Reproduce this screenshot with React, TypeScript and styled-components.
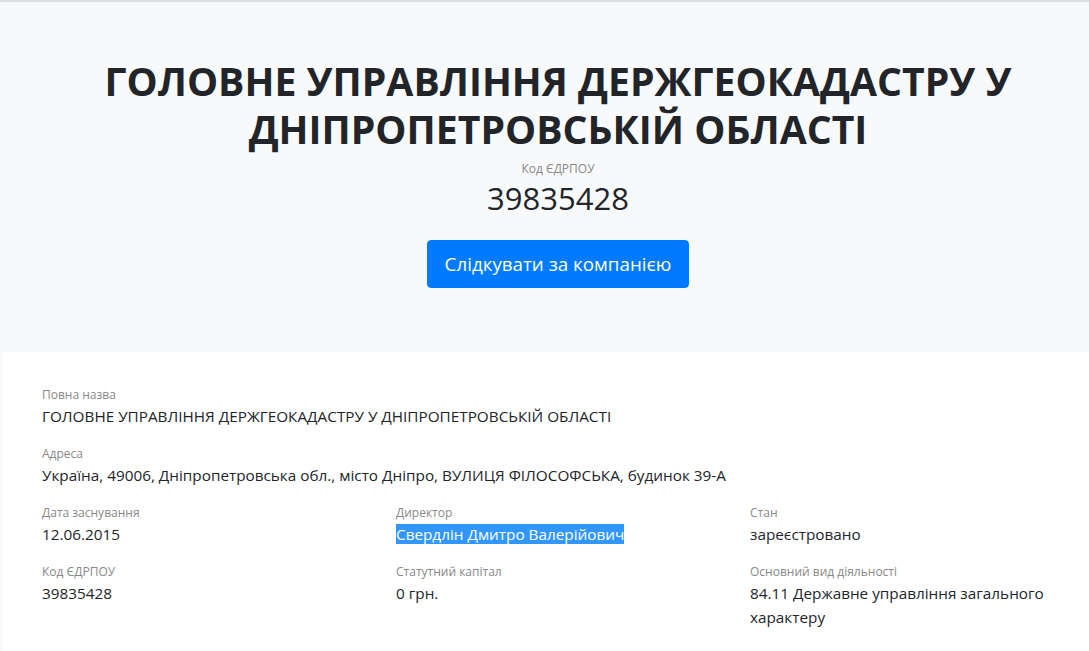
import styled, { createGlobalStyle } from "styled-components";

const GlobalStyle = createGlobalStyle`
  html, body {
    margin: 0;
    padding: 0;
    background: #f8f9fa;
  }

  body {
    font-family: "Open Sans", "Noto Sans", "DejaVu Sans", sans-serif;
    color: #212529;
  }

  * {
    box-sizing: border-box;
  }
`;

const Page = styled.div`
  border-top: 2px solid #dcdfe3;
  min-height: 651px;
  background: #f8f9fa;
`;

const Hero = styled.section`
  padding: 55px 0 0 27px;
  height: 350px;
  text-align: center;
`;

const Title = styled.h1`
  margin: 0 auto;
  max-width: 960px;
  font-size: 39.2px;
  font-weight: 700;
  line-height: 48px;
`;

const CodeLabel = styled.div`
  margin-top: 7px;
  font-size: 12px;
  line-height: 18px;
  color: #888;
`;

const CodeValue = styled.div`
  margin-top: 2px;
  font-size: 31px;
  line-height: 37px;
  margin-bottom: 23px;
`;

const FollowButton = styled.button`
  font-family: inherit;
  font-size: 18.8px;
  line-height: 30px;
  padding: 8px 17px;
  height: 48px;
  border: 1px solid #007bff;
  border-radius: 4px;
  background: #007bff;
  color: #fff;
  cursor: pointer;
`;

const Details = styled.section`
  margin-left: 3px;
  background: #fff;
  padding: 33px 0 20px 24px;
  display: grid;
  grid-template-columns: repeat(3, 1fr);
`;

const Field = styled.div<{ $wide?: boolean }>`
  grid-column: ${(p) => (p.$wide ? "1 / -1" : "auto")};
  padding: 0 15px;
  margin-bottom: 16px;
`;

const Label = styled.div`
  font-size: 12px;
  line-height: 19px;
  color: #888;
`;

const Value = styled.div`
  font-size: 15.3px;
  line-height: 24px;
  color: #212529;
`;

const Selected = styled.span`
  background: #3297fd;
  color: #fff;
`;

const fields = [
  { label: "Дата заснування", value: "12.06.2015" },
  { label: "Директор", value: "Свердлін Дмитро Валерійович", selected: true },
  { label: "Стан", value: "зареєстровано" },
  { label: "Код ЄДРПОУ", value: "39835428" },
  { label: "Статутний капітал", value: "0 грн." },
  { label: "Основний вид діяльності", value: "84.11 Державне управління загального характеру" },
];

export default function App() {
  return (
    <>
      <GlobalStyle />
      <Page>
        <Hero>
          <Title>ГОЛОВНЕ УПРАВЛІННЯ ДЕРЖГЕОКАДАСТРУ У ДНІПРОПЕТРОВСЬКІЙ ОБЛАСТІ</Title>
          <CodeLabel>Код ЄДРПОУ</CodeLabel>
          <CodeValue>39835428</CodeValue>
          <FollowButton>Слідкувати за компанією</FollowButton>
        </Hero>
        <Details>
          <Field $wide>
            <Label>Повна назва</Label>
            <Value>ГОЛОВНЕ УПРАВЛІННЯ ДЕРЖГЕОКАДАСТРУ У ДНІПРОПЕТРОВСЬКІЙ ОБЛАСТІ</Value>
          </Field>
          <Field $wide>
            <Label>Адреса</Label>
            <Value>Україна, 49006, Дніпропетровська обл., місто Дніпро, ВУЛИЦЯ ФІЛОСОФСЬКА, будинок 39-А</Value>
          </Field>
          {fields.map((f) => (
            <Field key={f.label}>
              <Label>{f.label}</Label>
              <Value>{f.selected ? <Selected>{f.value}</Selected> : f.value}</Value>
            </Field>
          ))}
        </Details>
      </Page>
    </>
  );
}
